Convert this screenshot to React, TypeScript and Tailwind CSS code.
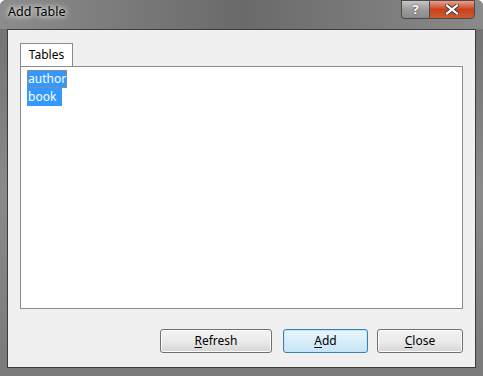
import React from "react";

function Btn({ u, rest, def, w }: { u: string; rest: string; def?: boolean; w: string }) {
  return (
    <button
      className={`${w} h-[24px] rounded-[3px] border text-[12px] text-black ${
        def
          ? "border-[#3c7fb1] bg-gradient-to-b from-[#eaf6fd] to-[#c7e5f6] shadow-[inset_0_0_0_1px_#bfe6f9]"
          : "border-[#707070] bg-gradient-to-b from-[#f2f2f2] via-[#ebebeb] to-[#d5d5d5] shadow-[inset_0_0_0_1px_#fcfcfc]"
      }`}
    >
      <span className="underline underline-offset-2">{u}</span>
      {rest}
    </button>
  );
}

export default function App() {
  return (
    <div
      className="w-[483px] h-[376px] flex flex-col bg-gradient-to-b from-[#6f6f6f] via-[#8a8a8a] to-[#7a7a7a] rounded-t-[6px] overflow-hidden"
      style={{ fontFamily: '"Noto Sans", "DejaVu Sans", sans-serif' }}
    >
      {/* title bar */}
      <div className="h-[29px] flex items-start justify-between relative bg-gradient-to-r from-[#8c8c8c] via-[#6a6a6a] to-[#8a8a8a]">
        <div className="pl-[8px] pt-[6px] text-[12.5px] text-black leading-none [text-shadow:0_0_8px_#fff,0_0_4px_#fff]">
          Add Table
        </div>
        <div className="flex mr-[8px]">
          <div className="w-[28px] h-[19px] border border-[#4a4a4a] border-r-0 rounded-bl-[4px] bg-gradient-to-b from-[#c6c6c6] via-[#9c9c9c] to-[#8a8a8a] flex items-center justify-center text-white font-bold text-[13px] [text-shadow:0_0_2px_#333]">
            ?
          </div>
          <div className="w-[46px] h-[19px] border border-[#4a4a4a] rounded-br-[4px] bg-gradient-to-b from-[#e8a08a] via-[#c8401e] to-[#d05a30] flex items-center justify-center">
            <svg width="14" height="11" viewBox="0 0 14 11">
              <path d="M2 1.5 L12 9.5 M12 1.5 L2 9.5" stroke="#3a3a3a" strokeWidth="4" strokeLinecap="square" />
              <path d="M2 1.5 L12 9.5 M12 1.5 L2 9.5" stroke="#fff" strokeWidth="2.2" strokeLinecap="square" />
            </svg>
          </div>
        </div>
      </div>

      {/* client area */}
      <div className="mx-[7px] mb-[8px] flex-1 border border-[#3c3c3c] bg-[#f0f0f0] flex flex-col px-[12px] pt-[13px] pb-[14px]">
        <div className="flex">
          <div className="w-[53px] h-[23px] border border-[#898c95] border-b-0 bg-white text-[12px] text-black flex items-center justify-center">
            Tables
          </div>
        </div>
        <div className="h-[243px] border border-[#898c95] bg-white pt-[3px] px-[6px] text-[12px] text-white flex flex-col items-start">
          <div className="h-[18px] bg-[#3399ff] outline-1 outline-dotted outline-[#d08030] -outline-offset-1 flex items-center px-[1px]">
            author
          </div>
          <div className="h-[18px] bg-[#3399ff] flex items-center pl-[1px] pr-[6px]">book</div>
        </div>
        <div className="flex-1 flex items-end justify-end">
          <Btn u="R" rest="efresh" w="w-[112px]" />
          <div className="w-[11px]" />
          <Btn u="A" rest="dd" w="w-[85px]" def />
          <div className="w-[9px]" />
          <Btn u="C" rest="lose" w="w-[86px]" />
        </div>
      </div>
    </div>
  );
}
